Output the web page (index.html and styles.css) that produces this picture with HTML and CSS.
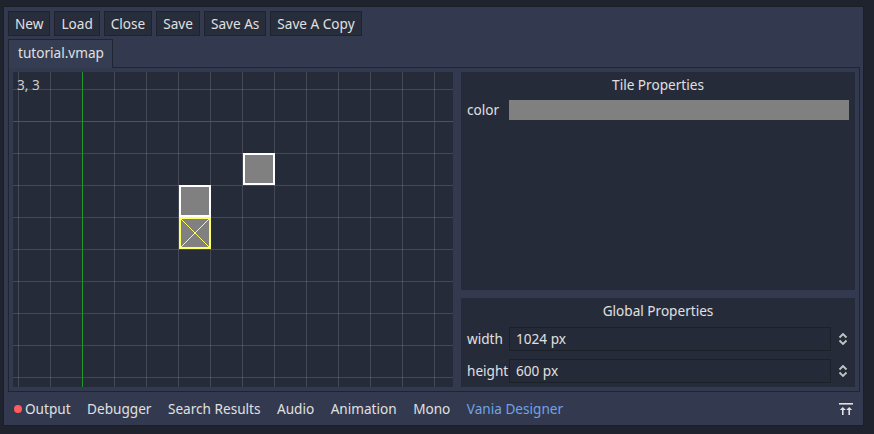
FILE: index.html
```html
<!DOCTYPE html>
<html>
<head>
<meta charset="utf-8">
<link rel="stylesheet" href="styles.css">
</head>
<body>
<div class="window">
  <div class="toolbar">
    <button class="btn">New</button>
    <button class="btn">Load</button>
    <button class="btn">Close</button>
    <button class="btn">Save</button>
    <button class="btn">Save As</button>
    <button class="btn">Save A Copy</button>
  </div>
  <div class="tabs">
    <div class="tab">tutorial.vmap</div>
  </div>
  <div class="tab-body">
    <div class="canvas">
      <svg class="grid" width="440" height="315" viewBox="0 0 440 315">
        <g stroke="rgba(255,255,255,0.14)" stroke-width="1">
          <line x1="5.5" y1="0" x2="5.5" y2="315"/>
          <line x1="37.5" y1="0" x2="37.5" y2="315"/>
          <line x1="101.5" y1="0" x2="101.5" y2="315"/>
          <line x1="133.5" y1="0" x2="133.5" y2="315"/>
          <line x1="165.5" y1="0" x2="165.5" y2="315"/>
          <line x1="197.5" y1="0" x2="197.5" y2="315"/>
          <line x1="229.5" y1="0" x2="229.5" y2="315"/>
          <line x1="261.5" y1="0" x2="261.5" y2="315"/>
          <line x1="293.5" y1="0" x2="293.5" y2="315"/>
          <line x1="325.5" y1="0" x2="325.5" y2="315"/>
          <line x1="357.5" y1="0" x2="357.5" y2="315"/>
          <line x1="389.5" y1="0" x2="389.5" y2="315"/>
          <line x1="421.5" y1="0" x2="421.5" y2="315"/>
          <line x1="0" y1="17.5" x2="440" y2="17.5"/>
          <line x1="0" y1="81.5" x2="440" y2="81.5"/>
          <line x1="0" y1="113.5" x2="440" y2="113.5"/>
          <line x1="0" y1="145.5" x2="440" y2="145.5"/>
          <line x1="0" y1="177.5" x2="440" y2="177.5"/>
          <line x1="0" y1="209.5" x2="440" y2="209.5"/>
          <line x1="0" y1="241.5" x2="440" y2="241.5"/>
          <line x1="0" y1="273.5" x2="440" y2="273.5"/>
          <line x1="0" y1="305.5" x2="440" y2="305.5"/>
        </g>
        <line x1="0" y1="49.5" x2="440" y2="49.5" stroke="#8a3a45" stroke-width="1"/>
        <line x1="69.5" y1="0" x2="69.5" y2="315" stroke="#1f9a2b" stroke-width="1"/>
        <rect x="231" y="82" width="30" height="30" fill="#808080" stroke="#ffffff" stroke-width="2"/>
        <rect x="167" y="114" width="30" height="30" fill="#808080" stroke="#ffffff" stroke-width="2"/>
        <rect x="167" y="146" width="30" height="30" fill="#808080" stroke="#ffff66" stroke-width="2"/>
        <line x1="168" y1="147" x2="196" y2="175" stroke="#ffff66" stroke-width="1"/>
        <line x1="196" y1="147" x2="168" y2="175" stroke="#ffff66" stroke-width="1"/>
      </svg>
      <span class="coords">3, 3</span>
    </div>
    <div class="side">
      <section class="box tile-box">
        <div class="box-title">Tile Properties</div>
        <div class="prop-row">
          <span class="prop-label">color</span>
          <div class="color-bar"></div>
        </div>
      </section>
      <section class="box global-box">
        <div class="box-title">Global Properties</div>
        <div class="prop-row">
          <span class="prop-label">width</span>
          <div class="spin">
            <div class="spin-input">1024 px</div>
            <svg class="spin-arrows" width="10" height="14" viewBox="0 0 10 14"><polyline points="1.5,5.5 5,2 8.5,5.5" fill="none" stroke="#c4c4c4" stroke-width="1.8"/><polyline points="1.5,8.5 5,12 8.5,8.5" fill="none" stroke="#c4c4c4" stroke-width="1.8"/></svg>
          </div>
        </div>
        <div class="prop-row">
          <span class="prop-label">height</span>
          <div class="spin">
            <div class="spin-input">600 px</div>
            <svg class="spin-arrows" width="10" height="14" viewBox="0 0 10 14"><polyline points="1.5,5.5 5,2 8.5,5.5" fill="none" stroke="#c4c4c4" stroke-width="1.8"/><polyline points="1.5,8.5 5,12 8.5,8.5" fill="none" stroke="#c4c4c4" stroke-width="1.8"/></svg>
          </div>
        </div>
      </section>
    </div>
  </div>
  <div class="bottombar">
    <span class="bb-item"><span class="dot"></span>Output</span>
    <span class="bb-item">Debugger</span>
    <span class="bb-item">Search Results</span>
    <span class="bb-item">Audio</span>
    <span class="bb-item">Animation</span>
    <span class="bb-item">Mono</span>
    <span class="bb-item active">Vania Designer</span>
    <span class="bb-spacer"></span>
    <svg class="bb-icon" width="14" height="12" viewBox="0 0 14 12">
      <rect x="0" y="0" width="14" height="1.6" fill="#e0e0e0"/>
      <polygon points="0.8,7 3.8,4 6.8,7" fill="#e0e0e0"/>
      <rect x="3" y="6" width="1.6" height="6" fill="#e0e0e0"/>
      <polygon points="7.2,7 10.2,4 13.2,7" fill="#e0e0e0"/>
      <rect x="9.4" y="6" width="1.6" height="6" fill="#e0e0e0"/>
    </svg>
  </div>
</div>
</body>
</html>
```
FILE: styles.css
```css
* { box-sizing: border-box; }
html, body {
  margin: 0;
  padding: 0;
  background: #1f232d;
  font-family: "Noto Sans", "Open Sans", sans-serif;
  font-size: 13.6px;
  color: #e0e0e0;
}
.window {
  margin: 6px 10px 8px 3px;
  width: 861px;
  height: 420px;
  background: #333a4f;
  border: 1px solid #1b1f28;
  display: flex;
  flex-direction: column;
  padding: 4px 3px 0 4px;
}
.toolbar {
  display: flex;
  gap: 4px;
  height: 25px;
}
.btn {
  font: inherit;
  color: #e0e0e0;
  background: #272d3b;
  border: 1px solid #1f2330;
  height: 25px;
  padding: 0 6px;
  line-height: 21px;
  margin: 0;
}
.tabs {
  display: flex;
  margin-top: 3px;
  height: 28px;
}
.tab {
  position: relative;
  z-index: 1;
  width: 105px;
  height: 29px;
  background: #353d52;
  border: 1px solid #21252f;
  border-bottom: none;
  padding: 0 0 0 9px;
  line-height: 26px;
}
.tab-body {
  display: flex;
  gap: 8px;
  width: 852px;
  height: 325px;
  border: 1px solid #21252f;
  padding: 4px 4px 4px 4px;
}
.canvas {
  position: relative;
  width: 440px;
  height: 315px;
  background: #262b3a;
  flex: none;
}
.grid { display: block; }
.coords {
  position: absolute;
  left: 4px;
  top: 3px;
  color: #cfcfcf;
  line-height: 20px;
}
.side {
  display: flex;
  flex-direction: column;
  gap: 8px;
  width: 394px;
}
.box {
  background: #262b3a;
  padding: 3px 6px 4px 6px;
  display: flex;
  flex-direction: column;
}
.tile-box { height: 218px; }
.global-box { height: 89px; gap: 8px; }
.box-title {
  text-align: center;
  line-height: 20px;
  height: 20px;
}
.tile-box .box-title { margin-bottom: 5px; }
.global-box .box-title { margin-bottom: -2px; }
.prop-row {
  display: flex;
  align-items: center;
}
.prop-label {
  width: 42px;
  flex: none;
  line-height: 20px;
}
.color-bar {
  flex: 1;
  height: 20px;
  background: #808080;
}
.spin {
  flex: 1;
  display: flex;
  align-items: center;
}
.spin-input {
  width: 322px;
  height: 24px;
  background: #252a38;
  border: 1px solid #1c2029;
  padding: 0 6px;
  line-height: 21px;
}
.spin-arrows {
  margin-left: 7px;
}
.bottombar {
  display: flex;
  align-items: center;
  height: 34px;
  padding: 0 7px 0 6px;
  gap: 16.5px;
}
.bb-item {
  display: flex;
  align-items: center;
  line-height: 20px;
}
.bb-item.active { color: #6fa3e6; }
.dot {
  width: 8px;
  height: 8px;
  border-radius: 50%;
  background: #ff5d5d;
  margin-right: 3px;
}
.bb-spacer { flex: 1; }
.bb-icon { display: block; }
```
